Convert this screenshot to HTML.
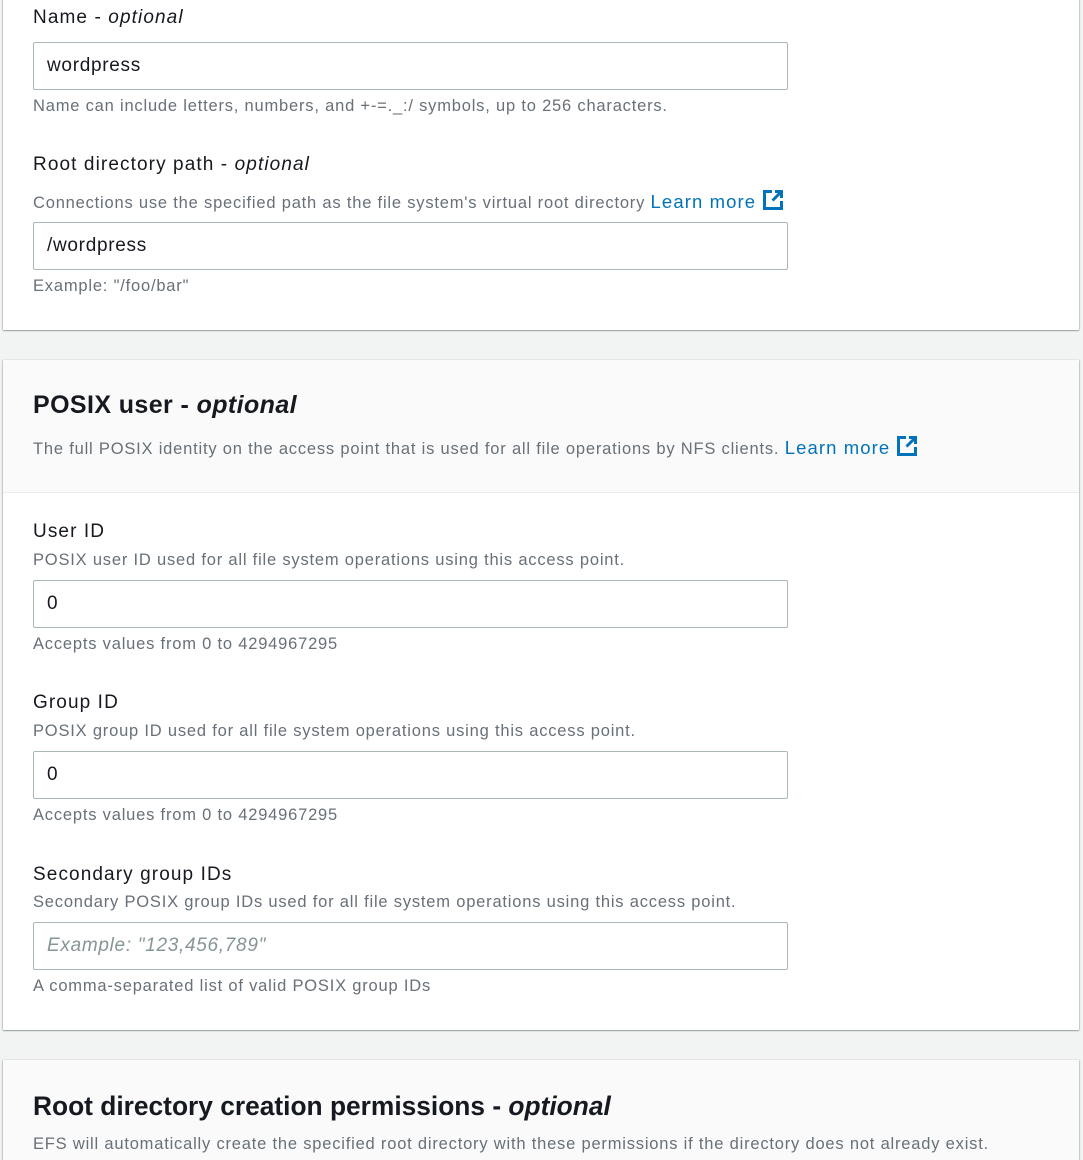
<!DOCTYPE html>
<html><head><style>
body{margin:0;width:1083px;height:1143px;background:#f2f3f3;font-family:"Liberation Sans",sans-serif;position:relative;overflow:hidden;color:#16191f}
.card{position:absolute;left:3px;width:1076px;background:#fff;box-shadow:0 1px 1px rgba(0,28,36,.35),1px 0 1px rgba(0,28,36,.15),-1px 0 1px rgba(0,28,36,.15)}
.t{position:absolute;left:33px;white-space:nowrap}
.lab{font-size:19px;letter-spacing:1.1px;color:#16191f}
.d{font-size:16.5px;color:#687078;letter-spacing:.8px}
.in{position:absolute;left:33px;width:753px;height:46px;border:1px solid #aab7b8;border-radius:2px;background:#fff;font-size:19px;letter-spacing:.7px;line-height:46px;box-sizing:content-box}
.in span{padding-left:13px}
.a{color:#0073bb;font-size:18.5px;letter-spacing:1.1px}
.ico{display:inline-block;vertical-align:-3px;margin-left:6px}
h2{position:absolute;left:33px;margin:0;font-size:25px;letter-spacing:.4px;font-weight:bold;white-space:nowrap}
</style></head><body>
<div class="card" style="top:-5px;height:335px"></div>
<div class="t lab" style="top:7px">Name - <i>optional</i></div>
<div class="in" style="top:42px"><span>wordpress</span></div>
<div class="t d" style="top:97px">Name can include letters, numbers, and +-=._:/ symbols, up to 256 characters.</div>
<div class="t lab" style="top:154px">Root directory path - <i>optional</i></div>
<div class="t d" style="top:189px">Connections use the specified path as the file system's virtual root directory <span class="a">Learn more<svg class="ico" width="22" height="22" viewBox="0 0 22 22"><path d="M10 2.5H2.5v17h17V12" fill="none" stroke="#0073bb" stroke-width="3"/><path d="M13 2.5h6.5V9M19.5 2.5l-9 9" fill="none" stroke="#0073bb" stroke-width="3"/></svg></span></div>
<div class="in" style="top:222px"><span>/wordpress</span></div>
<div class="t d" style="top:277px">Example: "/foo/bar"</div>

<div class="card" style="top:360px;height:670px"></div>
<div style="position:absolute;left:3px;top:360px;width:1076px;height:132px;background:#fafafa;border-bottom:1px solid #eaeded"></div>
<h2 style="top:391px">POSIX user - <i>optional</i></h2>
<div class="t d" style="top:435px">The full POSIX identity on the access point that is used for all file operations by NFS clients. <span class="a">Learn more<svg class="ico" width="22" height="22" viewBox="0 0 22 22"><path d="M10 2.5H2.5v17h17V12" fill="none" stroke="#0073bb" stroke-width="3"/><path d="M13 2.5h6.5V9M19.5 2.5l-9 9" fill="none" stroke="#0073bb" stroke-width="3"/></svg></span></div>
<div class="t lab" style="top:521px">User ID</div>
<div class="t d" style="top:551px">POSIX user ID used for all file system operations using this access point.</div>
<div class="in" style="top:580px"><span>0</span></div>
<div class="t d" style="top:635px">Accepts values from 0 to 4294967295</div>
<div class="t lab" style="top:692px">Group ID</div>
<div class="t d" style="top:722px">POSIX group ID used for all file system operations using this access point.</div>
<div class="in" style="top:751px"><span>0</span></div>
<div class="t d" style="top:806px">Accepts values from 0 to 4294967295</div>
<div class="t lab" style="top:864px">Secondary group IDs</div>
<div class="t d" style="top:893px">Secondary POSIX group IDs used for all file system operations using this access point.</div>
<div class="in" style="top:922px;color:#879596"><span><i>Example: "123,456,789"</i></span></div>
<div class="t d" style="top:977px">A comma-separated list of valid POSIX group IDs</div>

<div class="card" style="top:1060px;height:100px;background:#fafafa"></div>
<h2 style="top:1091px;font-size:27px;letter-spacing:0;transform:scaleX(.975);transform-origin:left">Root directory creation permissions - <i>optional</i></h2>
<div class="t d" style="top:1135px">EFS will automatically create the specified root directory with these permissions if the directory does not already exist.</div>
</body></html>
